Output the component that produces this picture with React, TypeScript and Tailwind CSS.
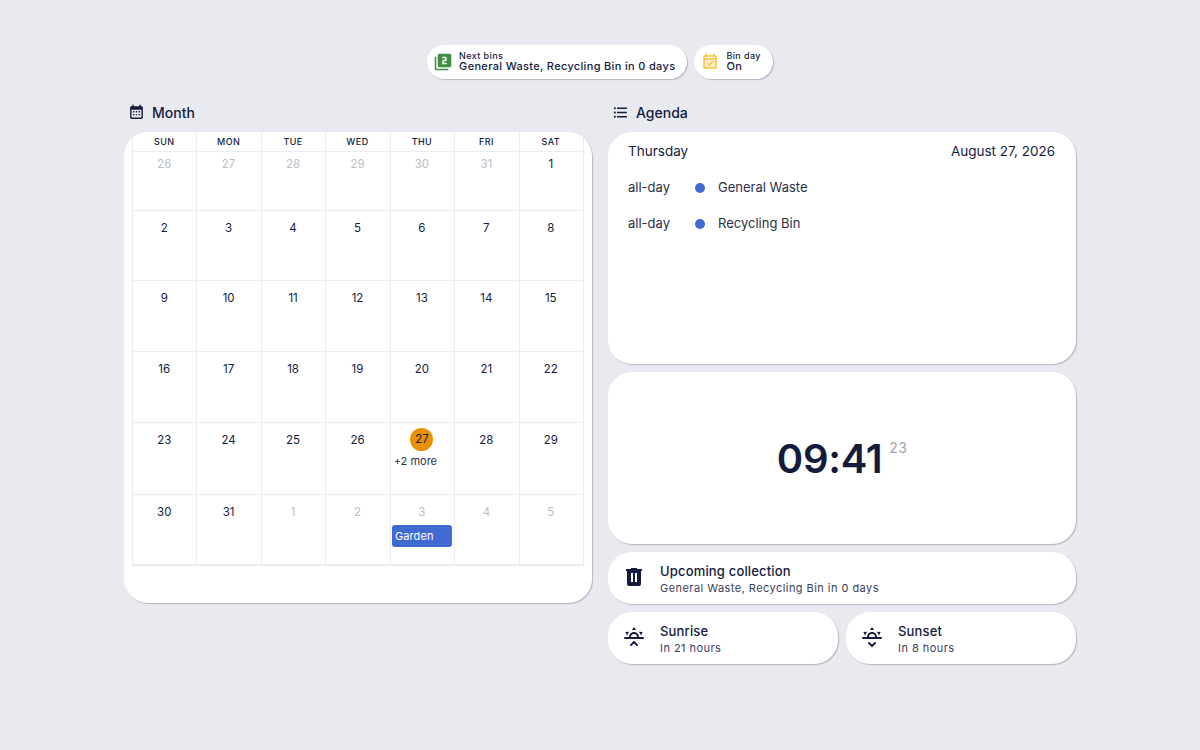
const weeks = [
  [26, 27, 28, 29, 30, 31, 1],
  [2, 3, 4, 5, 6, 7, 8],
  [9, 10, 11, 12, 13, 14, 15],
  [16, 17, 18, 19, 20, 21, 22],
  [23, 24, 25, 26, 27, 28, 29],
  [30, 31, 1, 2, 3, 4, 5],
];
const dayNames = ['SUN', 'MON', 'TUE', 'WED', 'THU', 'FRI', 'SAT'];
const rowHeights = ['h-[59px]', 'h-[70px]', 'h-[71px]', 'h-[71px]', 'h-[72px]', 'h-[69px]'];
const rowPadding = ['pt-[1px]', 'pt-[6px]', 'pt-[6px]', 'pt-[6px]', 'pt-[6px]', 'pt-[6px]'];

const sunBase =
  'M3,12H7A5,5 0 0,1 12,7A5,5 0 0,1 17,12H21A1,1 0 0,1 22,13A1,1 0 0,1 21,14H3A1,1 0 0,1 2,13A1,1 0 0,1 3,12M15,12A3,3 0 0,0 12,9A3,3 0 0,0 9,12H15M12,2L14.39,5.42C13.65,5.15 12.84,5 12,5C11.16,5 10.35,5.15 9.61,5.42L12,2M3.34,7L7.5,6.65C6.9,7.16 6.36,7.78 5.94,8.5C5.5,9.24 5.25,10 5.11,10.79L3.34,7M20.65,7L18.88,10.79C18.74,10 18.47,9.23 18.05,8.5C17.63,7.78 17.1,7.15 16.5,6.64L20.65,7';
const chevronUp =
  'M12.71,16.3L15.82,19.41C16.21,19.8 16.21,20.43 15.82,20.82C15.43,21.21 14.8,21.21 14.41,20.82L12,18.41L9.59,20.82C9.2,21.21 8.57,21.21 8.18,20.82C7.79,20.43 7.79,19.8 8.18,19.41L11.29,16.3C11.5,16.1 11.74,16 12,16C12.26,16 12.5,16.1 12.71,16.3Z';
const chevronDown =
  'M11.29,21.7L8.18,18.59C7.79,18.2 7.79,17.57 8.18,17.18C8.57,16.79 9.2,16.79 9.59,17.18L12,19.59L14.41,17.18C14.8,16.79 15.43,16.79 15.82,17.18C16.21,17.57 16.21,18.2 15.82,18.59L12.71,21.7C12.5,21.9 12.26,22 12,22C11.74,22 11.5,21.9 11.29,21.7Z';

const Icon = ({ d, className }: { d: string; className: string }) => (
  <svg viewBox="0 0 24 24" className={className} fill="currentColor">
    <path d={d} />
  </svg>
);

const Chip = ({ icon, label, value }: { icon: React.ReactNode; label: string; value: string }) => (
  <div className="flex h-[34px] items-center rounded-full bg-white pr-[12px] pl-[7px] shadow-[1px_1px_1px_rgba(20,27,60,0.25)]">
    {icon}
    <div className="mb-[2px] ml-[7px] flex flex-col text-[#141b3c]">
      <span className="text-[9px] leading-[10px] font-medium tracking-[0.4px]">{label}</span>
      <span className="text-[11px] leading-[11px] font-medium tracking-[0.33px]">{value}</span>
    </div>
  </div>
);

const Tile = ({ icon, title, sub }: { icon: React.ReactNode; title: string; sub: string }) => (
  <div className="flex h-[52px] flex-1 items-center rounded-[24px] bg-white pl-[14px] shadow-[1px_1px_1px_rgba(20,27,60,0.25)]">
    {icon}
    <div className="mt-[2px] ml-[14px] flex flex-col">
      <span className="text-[13px] leading-[17px] font-medium tracking-[0.17px] text-[#141b3c]">{title}</span>
      <span className="text-[11px] leading-[16px] tracking-[0.45px] text-[#3b4058]">{sub}</span>
    </div>
  </div>
);

const SectionTitle = ({ icon, title }: { icon: React.ReactNode; title: string }) => (
  <div className="flex h-[24px] items-center pl-[4px] text-[#141b3c]">
    {icon}
    <span className="ml-[7px] text-[14px] font-medium">{title}</span>
  </div>
);

const App = () => {
  return (
    <div className="flex h-[750px] w-[1200px] flex-col items-center bg-[#e9eaf0] pt-[45px] font-['Inter',sans-serif]">
      <div className="flex gap-[7px]">
        <Chip
          label="Next bins"
          value="General Waste, Recycling Bin in 0 days"
          icon={
            <svg viewBox="0 0 24 24" className="h-[18px] w-[18px] text-[#3f9142]" fill="currentColor">
              <path
                fillRule="evenodd"
                d="M7,1H21A2,2 0 0,1 23,3V17A2,2 0 0,1 21,19H7A2,2 0 0,1 5,17V3A2,2 0 0,1 7,1M17,13H13V11H15A2,2 0 0,0 17,9V7C17,5.89 16.1,5 15,5H11V7H15V9H13A2,2 0 0,0 11,11V15H17V13M3,5H1V21A2,2 0 0,0 3,23H19V21H3V5Z"
              />
            </svg>
          }
        />
        <Chip
          label="Bin day"
          value="On"
          icon={
            <svg viewBox="0 0 24 24" className="h-[18px] w-[18px] text-[#fbc02d]" fill="currentColor">
              <path d="M5,9H19V19H5Z" opacity="0.25" />
              <path d="M19,3H18V1H16V3H8V1H6V3H5A2,2 0 0,0 3,5V19A2,2 0 0,0 5,21H19A2,2 0 0,0 21,19V5A2,2 0 0,0 19,3M19,19H5V9H19V19M19,7H5V5H19V7M16.5,11.5L11,17L8,14L9.1,12.9L11,14.8L15.4,10.4L16.5,11.5Z" />
            </svg>
          }
        />
      </div>

      <div className="mt-[21px] flex w-[952px] gap-[16px]">
        {/* Month */}
        <div className="flex w-[468px] flex-col">
          <SectionTitle
            title="Month"
            icon={
              <svg viewBox="0 0 24 24" className="h-[17px] w-[17px]" fill="currentColor">
                <path
                  fillRule="evenodd"
                  d="M19,3H18V1H16V3H8V1H6V3H5C3.89,3 3,3.9 3,5V19A2,2 0 0,0 5,21H19A2,2 0 0,0 21,19V5A2,2 0 0,0 19,3M5,8H19V19H5V8M7,10V12H9V10H7M11,10V12H13V10H11M15,10V12H17V10H15M7,14V16H9V14H7M11,14V16H13V14H11M15,14V16H17V14H15Z"
                />
              </svg>
            }
          />
          <div className="mt-[8px] h-[471px] rounded-[24px] bg-white pl-[8px] shadow-[1px_1px_1px_rgba(20,27,60,0.25)]">
            <div className="w-[452px] border-r border-b border-[#ebecef] shadow-[0_1px_1px_rgba(20,27,60,0.08)]">
              <div className="grid h-[20px] grid-cols-7 border-b border-[#ebecef]">
                {dayNames.map((name) => (
                  <div
                    key={name}
                    className="flex items-center justify-center border-l border-[#ebecef] pr-px text-[9px] font-medium tracking-[0.45px] text-[#141b3c]"
                  >
                    {name}
                  </div>
                ))}
              </div>
              {weeks.map((week, w) => (
                <div key={w} className={`grid grid-cols-7 border-b border-[#ebecef] last:border-b-0 ${rowHeights[w]}`}>
                  {week.map((day, i) => {
                    const outside = (w === 0 && day > 7) || (w === 5 && day < 7);
                    const today = w === 4 && i === 4;
                    return (
                      <div key={i} className={`flex flex-col items-center border-l border-[#ebecef] pr-px ${rowPadding[w]}`}>
                        {today ? (
                          <span className="-mt-px mb-px flex h-[23px] w-[23px] items-center justify-center rounded-full bg-[#ea9005] text-[11.5px] text-[#141b3c]">
                            {day}
                          </span>
                        ) : (
                          <span
                            className={`flex h-[23px] items-center text-[11.5px] ${
                              outside ? 'text-[#bdbec4]' : 'text-[#141b3c]'
                            }`}
                          >
                            {day}
                          </span>
                        )}
                        {today && (
                          <span className="mt-[2px] w-full pl-[3px] text-[11px] leading-[14px] text-[#2b3048]">
                            +2 more
                          </span>
                        )}
                        {w === 5 && i === 4 && (
                          <span className="mt-[1px] flex h-[22px] w-[60px] items-center rounded-[3px] bg-[#4169d2] pl-[3px] text-[11px] tracking-[0.1px] text-white">
                            Garden
                          </span>
                        )}
                      </div>
                    );
                  })}
                </div>
              ))}
            </div>
          </div>
        </div>

        {/* Agenda */}
        <div className="flex w-[468px] flex-col">
          <SectionTitle title="Agenda" icon={<Icon className="h-[17px] w-[17px]" d="M7,5H21V7H7V5M7,13V11H21V13H7M4,4.5A1.5,1.5 0 0,1 5.5,6A1.5,1.5 0 0,1 4,7.5A1.5,1.5 0 0,1 2.5,6A1.5,1.5 0 0,1 4,4.5M4,10.5A1.5,1.5 0 0,1 5.5,12A1.5,1.5 0 0,1 4,13.5A1.5,1.5 0 0,1 2.5,12A1.5,1.5 0 0,1 4,10.5M7,19V17H21V19H7M4,16.5A1.5,1.5 0 0,1 5.5,18A1.5,1.5 0 0,1 4,19.5A1.5,1.5 0 0,1 2.5,18A1.5,1.5 0 0,1 4,16.5Z" />} />
          <div className="mt-[8px] flex flex-col gap-[8px]">
            <div className="h-[232px] rounded-[24px] bg-white pt-[9px] pr-[21px] pl-[20px] shadow-[1px_1px_1px_rgba(20,27,60,0.25)]">
              <div className="flex h-[20px] items-center justify-between text-[13.5px] text-[#141b3c]">
                <span>Thursday</span>
                <span>August 27, 2026</span>
              </div>
              <div className="mt-[17px] flex flex-col gap-[16px]">
                {['General Waste', 'Recycling Bin'].map((name) => (
                  <div key={name} className="flex h-[20px] items-center text-[13px] text-[#2b3048]">
                    <span className="w-[67px]">all-day</span>
                    <span className="h-[10px] w-[10px] rounded-full bg-[#4169d2]" />
                    <span className="ml-[13px]">{name}</span>
                  </div>
                ))}
              </div>
            </div>

            <div className="flex h-[172px] items-center justify-center rounded-[24px] bg-white shadow-[1px_1px_1px_rgba(20,27,60,0.25)]">
              <div className="mt-[2px] flex items-start">
                <span className="text-[40px] leading-[50px] font-semibold tracking-[-0.3px] text-[#141b3c]">09:41</span>
                <span className="mt-[4px] ml-[7px] text-[14px] leading-[20px] tracking-[0.3px] text-[#a3a4ab]">23</span>
              </div>
            </div>

            <div className="flex">
              <Tile
                title="Upcoming collection"
                sub="General Waste, Recycling Bin in 0 days"
                icon={<Icon className="-mt-[2px] h-[24px] w-[24px] text-[#141b3c]" d="M9,3V4H4V6H5V19A2,2 0 0,0 7,21H17A2,2 0 0,0 19,19V6H20V4H15V3H9M9,8H11V17H9V8M13,8H15V17H13V8Z" />}
              />
            </div>
            <div className="flex gap-[8px]">
              <Tile title="Sunrise" sub="In 21 hours" icon={<Icon className="-mt-[2px] h-[24px] w-[24px] text-[#141b3c]" d={sunBase + chevronUp} />} />
              <Tile title="Sunset" sub="In 8 hours" icon={<Icon className="-mt-[2px] h-[24px] w-[24px] text-[#141b3c]" d={sunBase + chevronDown} />} />
            </div>
          </div>
        </div>
      </div>
    </div>
  );
};

export default App;
